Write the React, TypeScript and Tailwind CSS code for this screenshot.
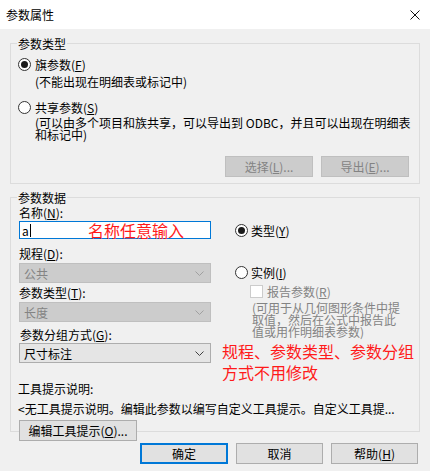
import React from "react";

const Mn = ({ k }: { k: string }) => (
  <span>
    (<span className="underline underline-offset-[1px]">{k}</span>)
  </span>
);

const Radio = ({ checked }: { checked?: boolean }) => (
  <span className="flex h-[13px] w-[13px] shrink-0 items-center justify-center rounded-full border border-[#333333] bg-white">
    {checked && <span className="h-[7px] w-[7px] rounded-full bg-[#1a1a1a]" />}
  </span>
);

const Chevron = ({ color }: { color: string }) => (
  <svg width="9" height="5" viewBox="0 0 9 5" className="shrink-0">
    <polyline points="0.5,0.5 4.5,4.5 8.5,0.5" fill="none" stroke={color} strokeWidth="1" />
  </svg>
);

const Select = ({ value, disabled }: { value: string; disabled?: boolean }) => (
  <div
    className={
      disabled
        ? "flex h-[20px] w-[192px] items-center justify-between border border-[#bfbfbf] bg-[#cccccc] pl-[4px] pr-[6px] text-[#838383]"
        : "flex h-[20px] w-[192px] items-center justify-between border border-[#adadad] bg-[#e5e5e5] pl-[4px] pr-[6px]"
    }
  >
    <span>{value}</span>
    <Chevron color={disabled ? "#a0a0a0" : "#404040"} />
  </div>
);

const Btn = ({
  children,
  disabled,
  primary,
  w = "w-[87px]",
}: {
  children: React.ReactNode;
  disabled?: boolean;
  primary?: boolean;
  w?: string;
}) => (
  <div
    className={[
      "flex h-[21px] items-center justify-center",
      w,
      disabled
        ? "border border-[#bfbfbf] bg-[#cccccc] text-[#838383]"
        : primary
        ? "border-2 border-[#0078d7] bg-[#e1e1e1]"
        : "border border-[#adadad] bg-[#e1e1e1]",
    ].join(" ")}
  >
    {children}
  </div>
);

export default function App() {
  return (
    <div className="h-[471px] w-[430px] overflow-hidden bg-[#f0f0f0] font-['Noto_Sans_CJK_SC',sans-serif] text-[12px] leading-[13px] text-black">
      {/* title bar */}
      <div className="flex h-[29px] items-center justify-between bg-white pl-[6px] pr-[10px]">
        <span>参数属性</span>
        <svg width="10" height="10" viewBox="0 0 10 10">
          <path d="M0.5 0.5 L9.5 9.5 M9.5 0.5 L0.5 9.5" stroke="#111" strokeWidth="1" />
        </svg>
      </div>

      {/* 参数类型 */}
      <div className="relative mx-[10px] mt-[14px] h-[141px] border border-[#dcdcdc]">
        <span className="absolute -top-[7px] left-[6px] bg-[#f0f0f0] px-[1px]">参数类型</span>
        <div className="flex items-center gap-[4px] pl-[7px] pt-[14px]">
          <Radio checked />
          <span>
            旗参数<Mn k="F" />
          </span>
        </div>
        <div className="mt-[4px] pl-[24px]">(不能出现在明细表或标记中)</div>
        <div className="mt-[13px] flex items-center gap-[4px] pl-[7px]">
          <Radio />
          <span>
            共享参数<Mn k="S" />
          </span>
        </div>
        <div className="mt-[3px] whitespace-nowrap pl-[24px] leading-[12px]">
          (可以由多个项目和族共享，可以导出到 ODBC，并且可以出现在明细表
          <br />
          和标记中)
        </div>
        <div className="mt-[15px] flex justify-end gap-[8px] pr-[10px]">
          <Btn disabled w="w-[88px]">
            选择<Mn k="L" />...
          </Btn>
          <Btn disabled w="w-[88px]">
            导出<Mn k="E" />...
          </Btn>
        </div>
      </div>

      {/* 参数数据 */}
      <div className="relative mx-[10px] mt-[13px] h-[235px] border border-[#dcdcdc]">
        <span className="absolute -top-[7px] left-[6px] bg-[#f0f0f0] px-[1px]">参数数据</span>
        <div className="flex">
          <div className="w-[200px] pl-[8px]">
            <div className="mt-[8px]">
              名称<Mn k="N" />:
            </div>
            <div className="relative mt-[2px] flex h-[18px] w-[192px] items-center border border-[#0078d7] bg-white pl-[2px]">
              <span>a</span>
              <span className="ml-[1px] h-[13px] w-[1px] bg-black" />
              <span className="absolute left-[68px] top-[-2px] text-[16px] leading-[20px] text-[#ff1a1a]">
                名称任意输入
              </span>
            </div>
            <div className="mt-[8px]">
              规程<Mn k="D" />:
            </div>
            <div className="mt-[3px]">
              <Select value="公共" disabled />
            </div>
            <div className="mt-[3px]">
              参数类型<Mn k="T" />:
            </div>
            <div className="mt-[3px]">
              <Select value="长度" disabled />
            </div>
            <div className="mt-[6px] pl-[1px]">
              参数分组方式<Mn k="G" />:
            </div>
            <div className="mt-[2px]">
              <Select value="尺寸标注" />
            </div>
          </div>

          <div className="ml-[24px] flex-1">
            <div className="mt-[26px] flex items-center gap-[3px]">
              <Radio checked />
              <span>
                类型<Mn k="Y" />
              </span>
            </div>
            <div className="mt-[29px] flex items-center gap-[3px]">
              <Radio />
              <span>
                实例<Mn k="I" />
              </span>
            </div>
            <div className="mt-[6px] flex items-center gap-[4px] pl-[15px] text-[#838383]">
              <span className="h-[13px] w-[13px] border border-[#cccccc] bg-white" />
              <span>
                报告参数<Mn k="R" />
              </span>
            </div>
            <div className="mt-[4px] whitespace-nowrap pl-[17px] leading-[12px] text-[#838383]">
              (可用于从几何图形条件中提
              <br />
              取值，然后在公式中报告此
              <br />
              值或用作明细表参数)
            </div>
            <div className="ml-[-13px] mt-[3px] text-[16px] leading-[21px] text-[#ff1a1a]">
              规程、参数类型、参数分组
              <br />
              方式不用修改
            </div>
          </div>
        </div>
        <div className="mt-[-1px] pl-[7px]">工具提示说明:</div>
        <div className="mt-[7px] whitespace-nowrap pl-[7px]">
          &lt;无工具提示说明。编辑此参数以编写自定义工具提示。自定义工具提...
        </div>
        <div className="mt-[5px] pl-[8px]">
          <Btn w="w-[118px]">
            编辑工具提示<Mn k="O" />...
          </Btn>
        </div>
      </div>

      {/* bottom buttons */}
      <div className="mt-[11px] flex justify-end gap-[8px] pr-[12px]">
        <Btn primary w="w-[88px]">确定</Btn>
        <Btn>取消</Btn>
        <Btn>
          帮助<Mn k="H" />
        </Btn>
      </div>
    </div>
  );
}
